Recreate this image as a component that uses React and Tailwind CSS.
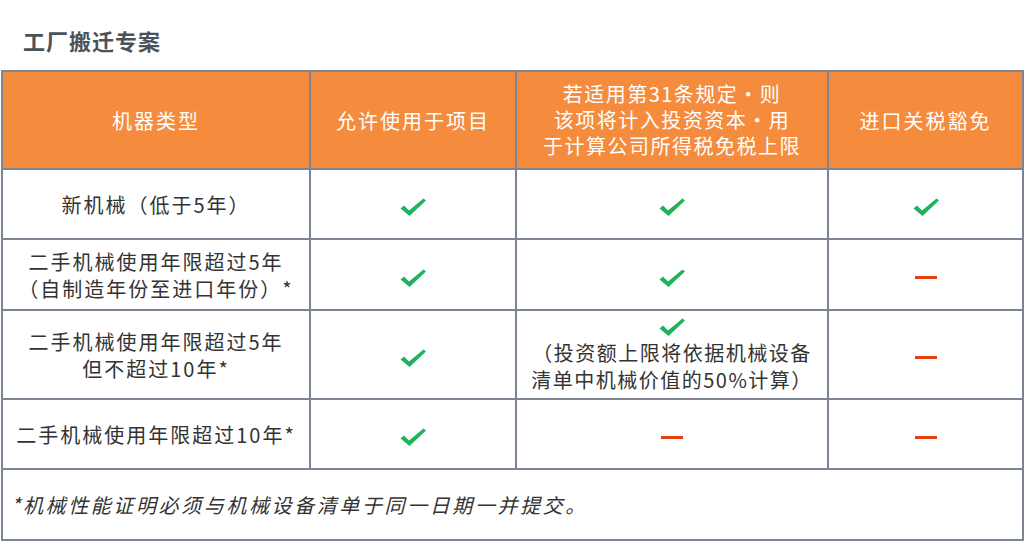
import React from 'react';

const font = { fontFamily: '"Noto Sans CJK SC", "Noto Sans", sans-serif' };

function Check() {
  return (
    <svg width="28" height="20" viewBox="0 0 28 20" className="inline-block">
      <path d="M1.5 11.5 L5 8.5 L10 13.5 L24.5 1.5 L27 3.5 L10.5 19 Z" fill="#1fb25a" />
    </svg>
  );
}

function Dash() {
  return <span className="inline-block w-[22px] h-[3px] bg-[#e8400f] align-middle" />;
}

const rows = [
  { label: ['新机械（低于5年）'], h: 'h-[70px]', cells: ['check', 'check', 'check'] },
  { label: ['二手机械使用年限超过5年', '（自制造年份至进口年份）*'], h: 'h-[71px]', cells: ['check', 'check', 'dash'] },
  { label: ['二手机械使用年限超过5年', '但不超过10年*'], h: 'h-[89px]', cells: ['check', 'note', 'dash'] },
  { label: ['二手机械使用年限超过10年*'], h: 'h-[70px]', cells: ['check', 'dash', 'dash'] },
];

export default function App() {
  const td = 'border-2 border-[#7b8593] text-center align-middle';
  return (
    <div className="w-[1024px] h-[542px] bg-white text-[#333333]" style={font}>
      <div className="h-[70px] pl-[23px] pt-[25px] text-[22px] font-bold text-[#4b525a] tracking-[1px] leading-[30px]">
        工厂搬迁专案
      </div>
      <table className="ml-[1px] w-[1021px] table-fixed border-collapse text-[20px] leading-[27px] tracking-[2px]">
        <colgroup>
          <col className="w-[308px]" />
          <col className="w-[206px]" />
          <col className="w-[312px]" />
          <col className="w-[195px]" />
        </colgroup>
        <thead>
          <tr className="h-[98px] bg-[#f58b3c] text-white">
            <th className={`${td} font-normal`}>机器类型</th>
            <th className={`${td} font-normal`}>允许使用于项目</th>
            <th className={`${td} font-normal leading-[26px] tracking-[1.5px]`}>
              <div>若适用第31条规定・则</div>
              <div>该项将计入投资资本・用</div>
              <div>于计算公司所得税免税上限</div>
            </th>
            <th className={`${td} font-normal`}>进口关税豁免</th>
          </tr>
        </thead>
        <tbody>
          {rows.map((r, i) => (
            <tr key={i} className={r.h}>
              <td className={td}>
                {r.label.map((l, j) => (
                  <div key={j}>{l}</div>
                ))}
              </td>
              {r.cells.map((c, j) => (
                <td key={j} className={td}>
                  {c === 'check' && <Check />}
                  {c === 'dash' && <Dash />}
                  {c === 'note' && (
                    <div className="flex flex-col items-center">
                      <div className="h-[22px] flex items-start"><Check /></div>
                      <div className="tracking-[1.5px]">（投资额上限将依据机械设备</div>
                      <div className="tracking-[1.5px]">清单中机械价值的50%计算）</div>
                    </div>
                  )}
                </td>
              ))}
            </tr>
          ))}
          <tr className="h-[71px]">
            <td colSpan={4} className="border-2 border-[#7b8593] text-left align-middle pl-[8px] italic tracking-[2.6px]">
              *机械性能证明必须与机械设备清单于同一日期一并提交。
            </td>
          </tr>
        </tbody>
      </table>
    </div>
  );
}
